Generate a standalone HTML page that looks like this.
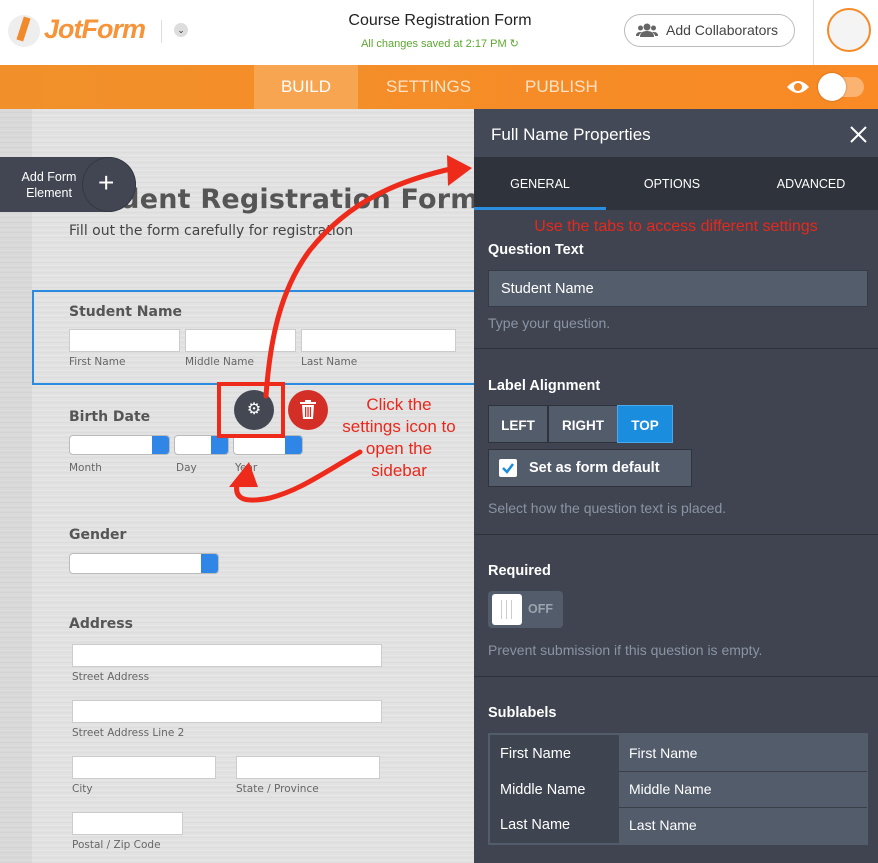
<!DOCTYPE html>
<html><head><meta charset="utf-8"><style>
*{margin:0;padding:0;box-sizing:border-box}
body{width:878px;height:863px;overflow:hidden;position:relative;font-family:"Liberation Sans",sans-serif;background:#fff}
.a{position:absolute}
.canvas{left:0;top:109px;width:474px;height:754px;background:repeating-linear-gradient(180deg,#e0e0e0 0,#e8e8e8 2px,#dadada 3px,#e4e4e4 5px)}
.strip{left:0;top:109px;width:32px;height:754px;background:rgba(0,0,0,0.04)}
.lbl{font-family:"DejaVu Sans",sans-serif;font-weight:bold;font-size:14px;color:#555}
.sub{font-family:"DejaVu Sans",sans-serif;font-size:10.5px;color:#666}
.inp{background:#fff;border:1px solid #ccc}
.sel{background:#fff;border:1px solid #bbb;border-radius:4px;overflow:hidden}
.sel i{position:absolute;right:0;top:0;bottom:0;width:17px;background:#2f86e6}
.sb{left:474px;top:109px;width:404px;height:754px;background:#3f4450}
.h{color:#fff;font-weight:bold;font-size:14.5px}
.hint{color:#8c94a2;font-size:14px}
.sep{left:474px;width:404px;height:1px;background:#2e323a}
.red{color:#e8281c;font-size:17px;text-align:center;line-height:22px}
.btn{top:408px;height:38px;background:#535c6b;border:1px solid #2f333b;color:#fff;font-weight:bold;font-size:13.5px;text-align:center;line-height:36px}
</style></head><body>
<!-- header -->
<div class="a" style="left:0;top:0;width:878px;height:65px;background:#fff"></div>
<div class="a" style="left:8px;top:15px;width:32px;height:32px;border-radius:50%;background:#eee"></div>
<div class="a" style="left:20px;top:17px;width:7px;height:24px;background:#f08a2a;transform:rotate(18deg)"></div>
<div class="a" style="left:44px;top:14px;font-size:27px;font-style:italic;font-weight:bold;color:#f7943a;letter-spacing:-1px">JotForm</div>
<div class="a" style="left:161px;top:20px;width:1px;height:23px;background:#ddd"></div>
<div class="a" style="left:174px;top:23px;width:14px;height:14px;border-radius:50%;background:#ddd;font-size:9px;text-align:center;line-height:14px;color:#333">⌄</div>
<div class="a" style="left:300px;top:12px;width:280px;text-align:center;font-size:16px;color:#222">Course Registration Form</div>
<div class="a" style="left:300px;top:37px;width:280px;text-align:center;font-size:11px;color:#5ca72e">All changes saved at 2:17 PM ↻</div>
<div class="a" style="left:624px;top:14px;width:171px;height:33px;border:1px solid #bbb;border-radius:17px;font-size:14px;color:#444;line-height:31px;padding-left:41px">Add Collaborators</div>
<svg class="a" style="left:636px;top:23px" width="22" height="14"><circle cx="11" cy="4" r="3.5" fill="#666"/><circle cx="4.5" cy="5" r="2.5" fill="#666"/><circle cx="17.5" cy="5" r="2.5" fill="#666"/><path d="M4 14 Q4 8 11 8 Q18 8 18 14Z M0 13 Q0 9 4 9 L6 9 Q3 11 3 13Z M22 13 Q22 9 18 9 L16 9 Q19 11 19 13Z" fill="#666"/></svg>
<div class="a" style="left:813px;top:0;width:1px;height:65px;background:#ddd"></div>
<div class="a" style="left:827px;top:8px;width:44px;height:44px;border-radius:50%;border:2px solid #f58a26;background:#f4f4f4"></div>
<!-- orange bar -->
<div class="a" style="left:0;top:65px;width:878px;height:44px;background:linear-gradient(90deg,#f1902a,#f98a25)"></div>
<div class="a" style="left:254px;top:65px;width:104px;height:44px;background:#f7a550"></div>
<div class="a" style="left:254px;top:77px;width:104px;text-align:center;color:#fff;font-size:17px">BUILD</div>
<div class="a" style="left:386px;top:77px;color:#fde3c8;font-size:17px">SETTINGS</div>
<div class="a" style="left:525px;top:77px;color:#fde3c8;font-size:17px">PUBLISH</div>
<svg class="a" style="left:786px;top:79px" width="24" height="16"><path d="M1 8 Q12 -4 23 8 Q12 20 1 8Z" fill="#fff"/><circle cx="12" cy="8" r="4" fill="#f58a26"/></svg>
<div class="a" style="left:820px;top:77px;width:44px;height:20px;border-radius:10px;background:rgba(255,255,255,0.35)"></div>
<div class="a" style="left:818px;top:73px;width:28px;height:28px;border-radius:50%;background:#fff;box-shadow:0 0 2px rgba(0,0,0,.3)"></div>
<!-- canvas -->
<div class="a canvas"></div><div class="a strip"></div>
<div class="a" style="left:68px;top:184px;font-family:'DejaVu Sans',sans-serif;font-size:27px;font-weight:bold;color:#555;white-space:nowrap;letter-spacing:0.2px">Student Registration Form</div>
<div class="a" style="left:0;top:157px;width:136px;height:55px;border-radius:0 28px 28px 0;background:#414652"></div>
<div class="a" style="left:82px;top:157px;width:54px;height:55px;border-radius:50%;border:1px solid #333842"></div>
<div class="a" style="left:12px;top:169px;width:74px;text-align:center;color:#fff;font-size:12.5px;line-height:16px">Add Form Element</div>
<div class="a" style="left:98px;top:167px;color:#fff;font-size:28px;font-weight:300">+</div>
<div class="a" style="left:69px;top:223px;font-family:'DejaVu Sans',sans-serif;font-size:14px;color:#444">Fill out the form carefully for registration</div>
<div class="a" style="left:32px;top:290px;width:445px;height:95px;border:2px solid #2b8be0;border-right:none"></div>
<div class="a lbl" style="left:69px;top:304px">Student Name</div>
<div class="a inp" style="left:69px;top:329px;width:111px;height:23px"></div>
<div class="a inp" style="left:185px;top:329px;width:111px;height:23px"></div>
<div class="a inp" style="left:301px;top:329px;width:155px;height:23px"></div>
<div class="a sub" style="left:69px;top:356px">First Name</div>
<div class="a sub" style="left:185px;top:356px">Middle Name</div>
<div class="a sub" style="left:301px;top:356px">Last Name</div>
<div class="a lbl" style="left:69px;top:409px">Birth Date</div>
<div class="a sel" style="left:69px;top:435px;width:101px;height:20px"><i></i></div>
<div class="a sel" style="left:174px;top:435px;width:55px;height:20px"><i></i></div>
<div class="a sel" style="left:233px;top:435px;width:70px;height:20px"><i></i></div>
<div class="a sub" style="left:69px;top:462px">Month</div>
<div class="a sub" style="left:176px;top:462px">Day</div>
<div class="a sub" style="left:235px;top:462px">Year</div>
<div class="a" style="left:234px;top:390px;width:40px;height:40px;border-radius:50%;background:#434852;color:#fff;text-align:center;line-height:40px;font-size:16px">⚙</div>
<div class="a" style="left:288px;top:390px;width:40px;height:40px;border-radius:50%;background:#d42f26"></div>
<svg class="a" style="left:300px;top:400px" width="16" height="20"><rect x="0" y="2" width="16" height="2" fill="#fff"/><rect x="5" y="0" width="6" height="2" fill="#fff"/><path d="M2 5 H14 L13 19 H3Z" fill="#fff"/><rect x="5" y="7" width="1.3" height="10" fill="#d42f26"/><rect x="7.4" y="7" width="1.3" height="10" fill="#d42f26"/><rect x="9.8" y="7" width="1.3" height="10" fill="#d42f26"/></svg>
<div class="a lbl" style="left:69px;top:527px">Gender</div>
<div class="a sel" style="left:69px;top:553px;width:150px;height:21px"><i></i></div>
<div class="a lbl" style="left:69px;top:616px">Address</div>
<div class="a inp" style="left:72px;top:644px;width:310px;height:23px"></div>
<div class="a sub" style="left:72px;top:671px">Street Address</div>
<div class="a inp" style="left:72px;top:700px;width:310px;height:23px"></div>
<div class="a sub" style="left:72px;top:727px">Street Address Line 2</div>
<div class="a inp" style="left:72px;top:756px;width:144px;height:23px"></div>
<div class="a inp" style="left:236px;top:756px;width:144px;height:23px"></div>
<div class="a sub" style="left:72px;top:783px">City</div>
<div class="a sub" style="left:236px;top:783px">State / Province</div>
<div class="a inp" style="left:72px;top:812px;width:111px;height:23px"></div>
<div class="a sub" style="left:72px;top:839px">Postal / Zip Code</div>
<!-- sidebar -->
<div class="a sb"></div>
<div class="a" style="left:474px;top:109px;width:404px;height:48px;background:#434956"></div>
<div class="a" style="left:491px;top:125px;color:#fff;font-size:17px">Full Name Properties</div>
<svg class="a" style="left:850px;top:126px" width="17" height="17"><path d="M1 1 L16 16 M16 1 L1 16" stroke="#fff" stroke-width="2"/></svg>
<div class="a" style="left:474px;top:157px;width:404px;height:53px;background:#2f333b"></div>
<div class="a" style="left:474px;top:207px;width:132px;height:3px;background:#2a8fe0"></div>
<div class="a" style="left:474px;top:177px;width:132px;text-align:center;color:#fff;font-size:12.5px">GENERAL</div>
<div class="a" style="left:606px;top:177px;width:132px;text-align:center;color:#fff;font-size:12.5px">OPTIONS</div>
<div class="a" style="left:744px;top:177px;width:134px;text-align:center;color:#fff;font-size:12.5px">ADVANCED</div>
<div class="a" style="left:474px;top:218px;width:404px;text-align:center;color:#e8281c;font-size:16px">Use the tabs to access different settings</div>
<div class="a h" style="left:488px;top:242px">Question Text</div>
<div class="a" style="left:488px;top:270px;width:380px;height:37px;background:#545d6c;border:1px solid #363b45;color:#fff;font-size:14.5px;line-height:37px;padding-left:12px">Student Name</div>
<div class="a hint" style="left:488px;top:315px">Type your question.</div>
<div class="a sep" style="top:348px"></div>
<div class="a h" style="left:488px;top:378px">Label Alignment</div>
<div class="a btn" style="left:488px;top:405px;width:60px;line-height:40px">LEFT</div>
<div class="a btn" style="left:548px;top:405px;width:70px;line-height:40px">RIGHT</div>
<div class="a btn" style="left:617px;top:405px;width:56px;background:#1b8ddf;border-color:#4aaaf0;line-height:40px">TOP</div>
<div class="a" style="left:488px;top:449px;width:204px;height:38px;background:#535c6b;border:1px solid #2f333b;color:#fff;font-weight:bold;font-size:14.5px;line-height:37px;padding-left:40px">Set as form default</div>
<div class="a" style="left:499px;top:459px;width:18px;height:18px;background:#fff;border-radius:2px"></div>
<svg class="a" style="left:501px;top:461px" width="14" height="14"><path d="M2 7 L6 11 L12 3" fill="none" stroke="#1b8ddf" stroke-width="2.5"/></svg>
<div class="a hint" style="left:488px;top:500px">Select how the question text is placed.</div>
<div class="a sep" style="top:534px"></div>
<div class="a h" style="left:488px;top:563px">Required</div>
<div class="a" style="left:488px;top:591px;width:75px;height:37px;background:#535c6b;border-radius:4px;color:#9aa3b0;font-weight:bold;font-size:12.5px;line-height:37px;padding-left:40px">OFF</div>
<div class="a" style="left:492px;top:594px;width:30px;height:31px;background:#fff;border-radius:3px"></div>
<div class="a" style="left:501px;top:600px;width:11px;height:19px;border-left:1px solid #ccc;border-right:1px solid #ccc"></div>
<div class="a" style="left:506px;top:600px;width:1px;height:19px;background:#ccc"></div>
<div class="a hint" style="left:488px;top:642px">Prevent submission if this question is empty.</div>
<div class="a sep" style="top:676px"></div>
<div class="a h" style="left:488px;top:705px">Sublabels</div>
<div class="a" style="left:488px;top:733px;width:380px;height:112px;background:#535c6b"></div>
<div class="a" style="left:490px;top:735px;width:129px;height:108px;background:#3e4450"></div>
<div class="a" style="left:619px;top:771px;width:248px;height:1px;background:#3a3f4a"></div>
<div class="a" style="left:619px;top:807px;width:248px;height:1px;background:#3a3f4a"></div>
<div class="a" style="left:500px;top:746px;color:#fff;font-size:14.5px">First Name</div>
<div class="a" style="left:500px;top:782px;color:#fff;font-size:14.5px">Middle Name</div>
<div class="a" style="left:500px;top:817px;color:#fff;font-size:14.5px">Last Name</div>
<div class="a" style="left:629px;top:745px;color:#fff;font-size:14px">First Name</div>
<div class="a" style="left:629px;top:781px;color:#fff;font-size:14px">Middle Name</div>
<div class="a" style="left:629px;top:817px;color:#fff;font-size:14px">Last Name</div>
<!-- annotations -->
<div class="a red" style="left:338px;top:394px;width:122px">Click the settings icon to open the sidebar</div>
<svg class="a" style="left:0;top:0" width="878" height="863">
<rect x="219" y="384" width="64" height="52" fill="none" stroke="#ee2a1b" stroke-width="4"/>
<path d="M266 396 C270 340 280 290 310 250 C350 200 400 180 455 168" fill="none" stroke="#ee2a1b" stroke-width="5" stroke-linecap="round"/>
<path d="M447 155 L472 168 L448 186 Z" fill="#ee2a1b"/>
<path d="M360 452 C320 475 300 490 270 498 C245 503 232 500 238 480" fill="none" stroke="#ee2a1b" stroke-width="5" stroke-linecap="round"/>
<path d="M229 487 L249 462 L258 487 Z" fill="#ee2a1b"/>
</svg>
</body></html>
